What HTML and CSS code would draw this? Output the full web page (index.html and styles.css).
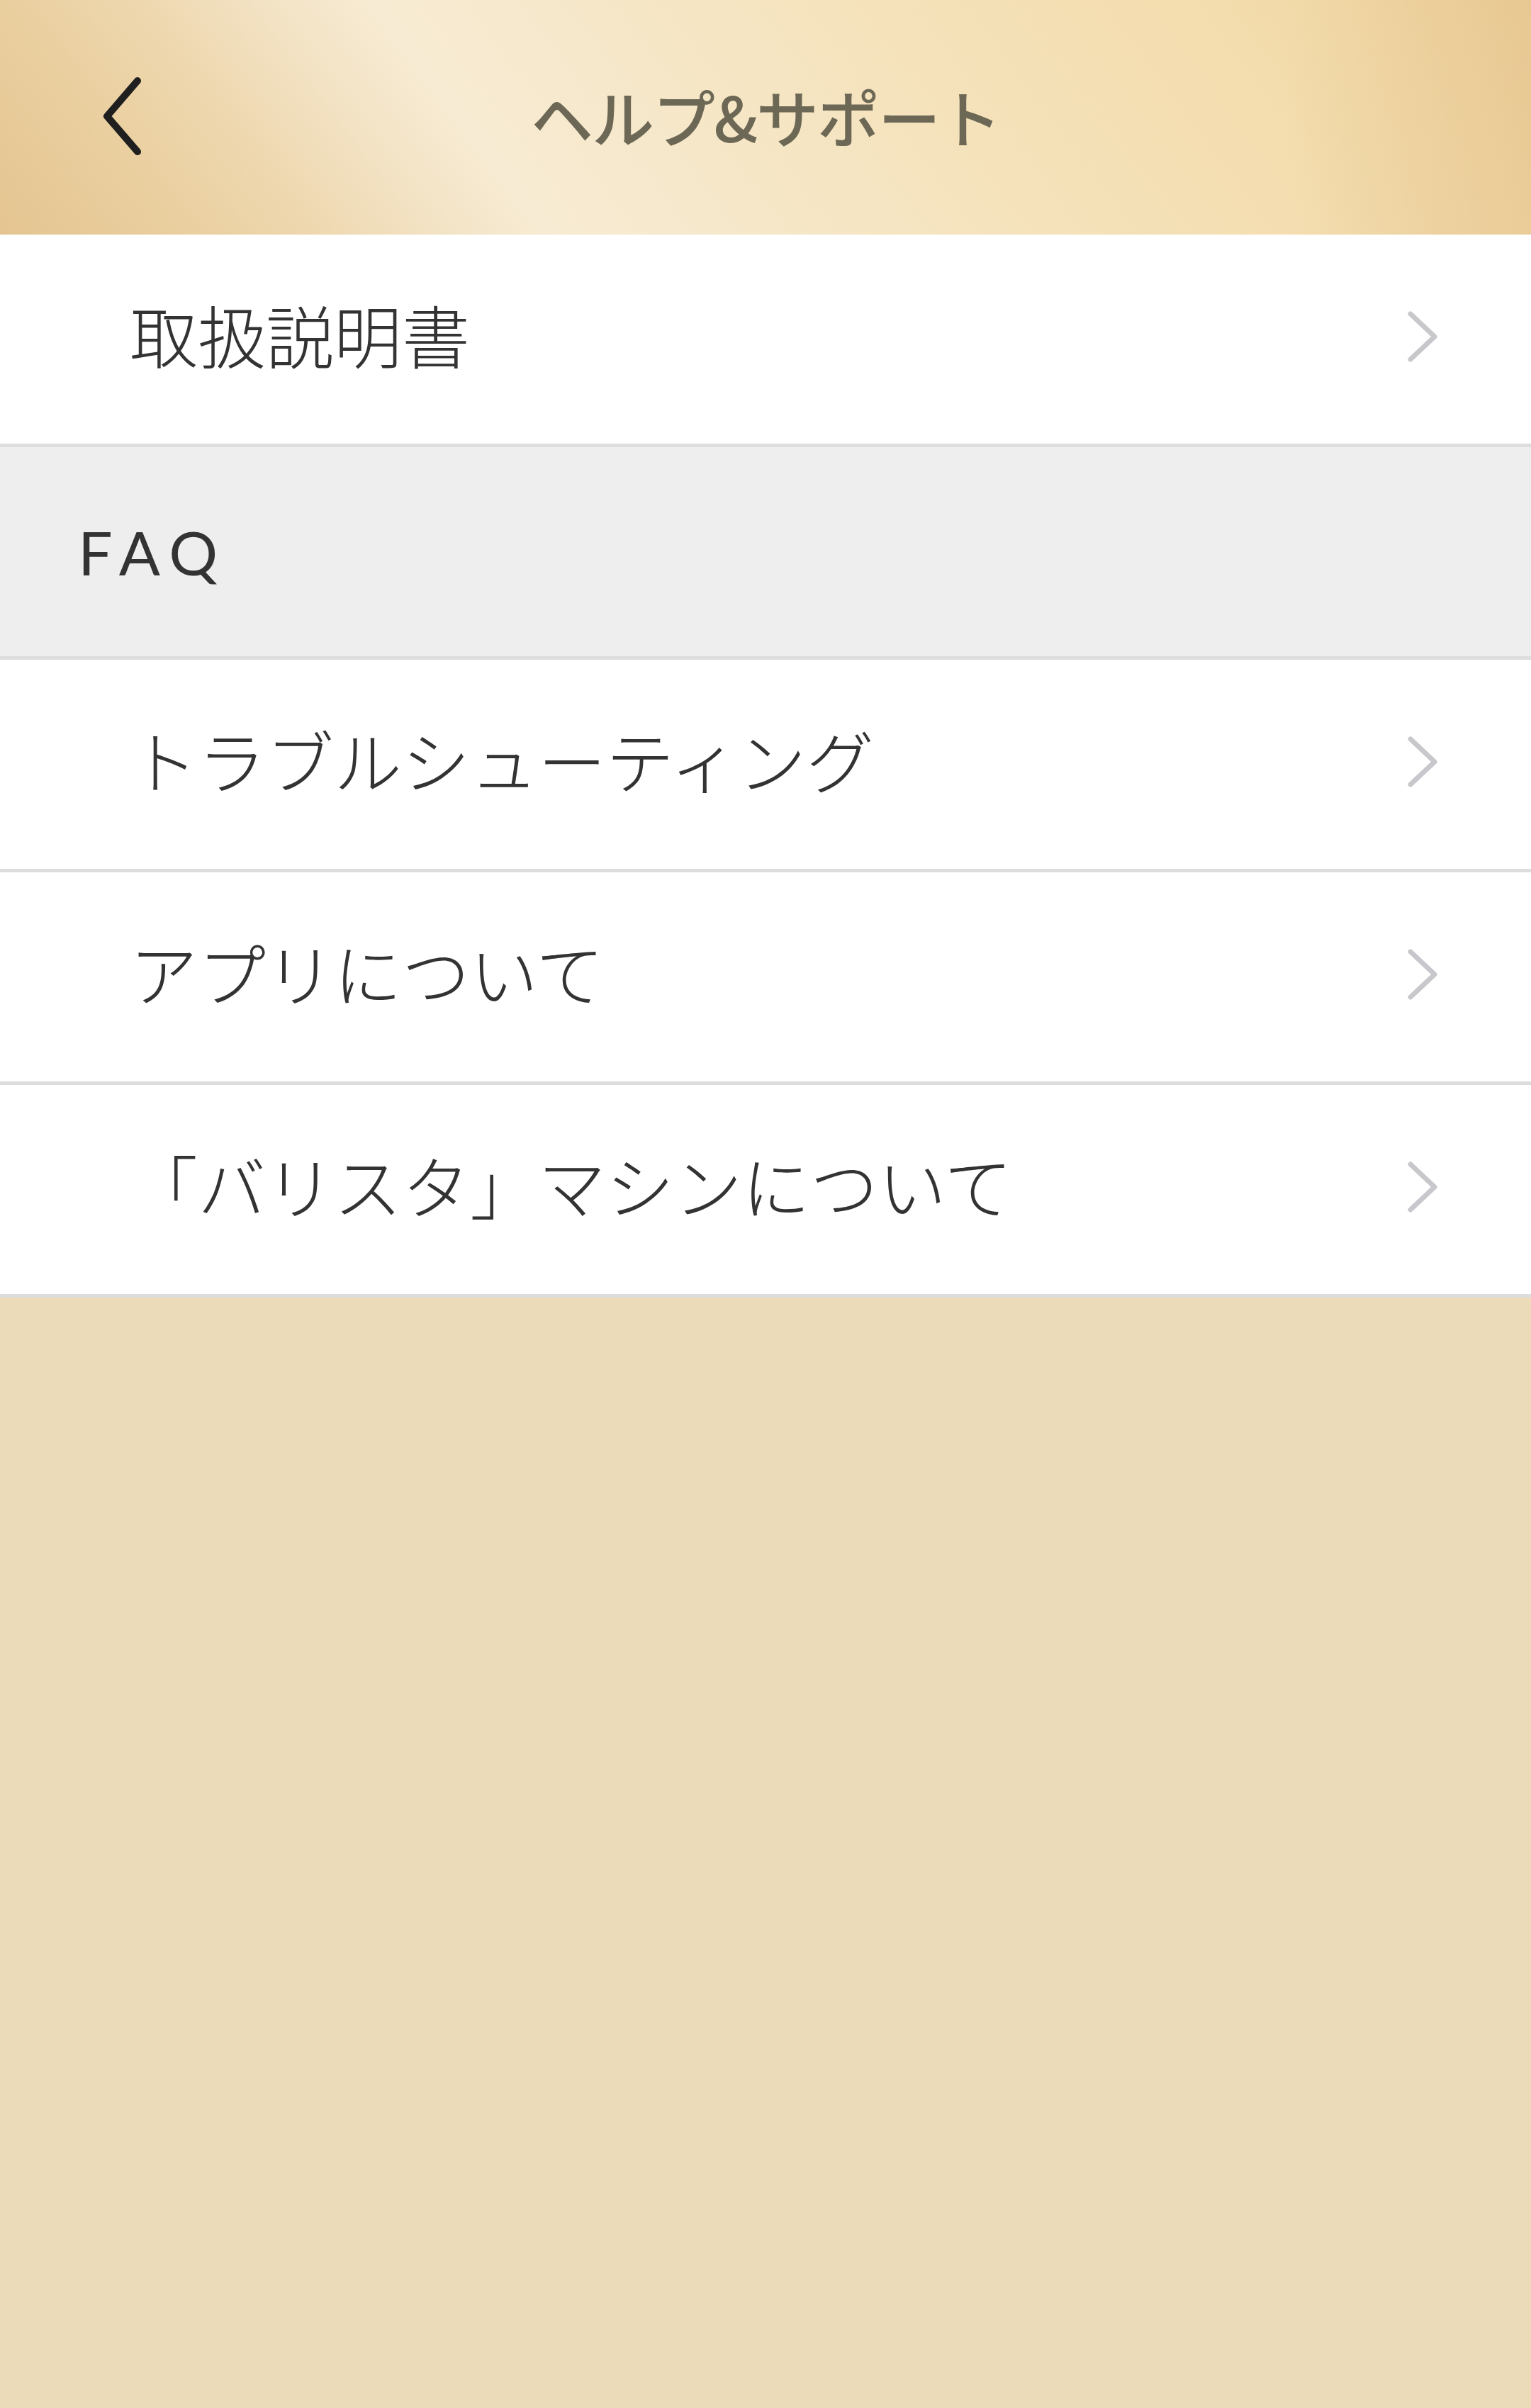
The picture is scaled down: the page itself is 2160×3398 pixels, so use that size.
FILE: index.html
```html
<!DOCTYPE html>
<html lang="ja">
<head>
<meta charset="UTF-8">
<meta name="viewport" content="width=device-width, initial-scale=1.0">
<title>ヘルプ&amp;サポート</title>
<link rel="stylesheet" href="styles.css">
</head>
<body>
<div class="help-page">
    <header class="help-header">
        <a class="help-back" href="#" aria-label="戻る">
            <svg width="70" height="112" viewBox="0 0 70 112">
                <polyline points="55,6 12,56 55,106" fill="none" stroke="#1f1f1f" stroke-width="10" stroke-linecap="round" stroke-linejoin="round"/>
            </svg>
        </a>
        <h1 class="help-title">ヘルプ&amp;サポート</h1>
    </header>
    <ul class="help-list">
        <!-- 取扱説明書 -->
        <li class="help-item"><a href="#"><span>取扱説明書</span><svg class="help-arrow" width="44" height="74" viewBox="0 0 44 74"><polyline points="5,5 39,37 5,69" fill="none" stroke="#c8c8cc" stroke-width="7" stroke-linecap="round" stroke-linejoin="round"/></svg></a></li>
        <!-- FAQ -->
        <li class="help-section">FAQ</li>
        <li class="help-item"><a href="#"><span>トラブルシューティング</span><svg class="help-arrow" width="44" height="74" viewBox="0 0 44 74"><polyline points="5,5 39,37 5,69" fill="none" stroke="#c8c8cc" stroke-width="7" stroke-linecap="round" stroke-linejoin="round"/></svg></a></li>
        <li class="help-item"><a href="#"><span>アプリについて</span><svg class="help-arrow" width="44" height="74" viewBox="0 0 44 74"><polyline points="5,5 39,37 5,69" fill="none" stroke="#c8c8cc" stroke-width="7" stroke-linecap="round" stroke-linejoin="round"/></svg></a></li>
        <li class="help-item"><a href="#"><span>「バリスタ」マシンについて</span><svg class="help-arrow" width="44" height="74" viewBox="0 0 44 74"><polyline points="5,5 39,37 5,69" fill="none" stroke="#c8c8cc" stroke-width="7" stroke-linecap="round" stroke-linejoin="round"/></svg></a></li>
    </ul>
</div>
</body>
</html>
```

FILE: styles.css
```css
html, body {
    margin: 0;
    padding: 0;
}
body {
    background: #ecdbb8;
    min-height: 3398px;
    font-family: "Noto Sans CJK JP", "Noto Sans", sans-serif;
    color: #333;
}
.help-header {
    height: 331px;
    display: flex;
    align-items: center;
    justify-content: center;
    position: relative;
    background:
        linear-gradient(to right, rgba(228, 194, 140, 0) 84%, rgba(228, 194, 140, 0.55) 100%),
        linear-gradient(53deg, #e4c592 0%, #e9cd9c 9%, #eed7ae 18%, #f3e3c5 26%, #f7ebd3 32%, #f6e8cb 42%, #f5e3bd 58%, #f4deb1 76%, #f1d8a6 90%, #ecd09c 100%);
}
.help-back {
    position: absolute;
    left: 139px;
    top: 108px;
    display: block;
    width: 70px;
    height: 112px;
}
.help-back svg {
    display: block;
}
.help-title {
    margin: 0;
    font-size: 88px;
    font-weight: 500;
    color: #6d6856;
    line-height: 1;
    letter-spacing: -2px;
    margin-top: -6px;
}
.help-list {
    list-style: none;
    margin: 0;
    padding: 0;
}
.help-item {
    background: #fff;
    border-bottom: 5px solid #dddddd;
}
.help-item a {
    display: flex;
    align-items: center;
    justify-content: space-between;
    height: 295px;
    padding: 0 131px 0 183px;
    color: #333;
    text-decoration: none;
}
.help-item span {
    font-size: 96px;
    font-weight: 300;
    line-height: 1;
    margin-top: -16px;
}
.help-arrow {
    display: block;
    margin-top: -8px;
}
.help-section {
    background: #eeeeee;
    border-bottom: 5px solid #dddddd;
    height: 295px;
    display: flex;
    align-items: center;
    padding-left: 110px;
    font-family: Lato, "Noto Sans", sans-serif;
    font-size: 86px;
    letter-spacing: 14px;
    color: #333;
}
```
